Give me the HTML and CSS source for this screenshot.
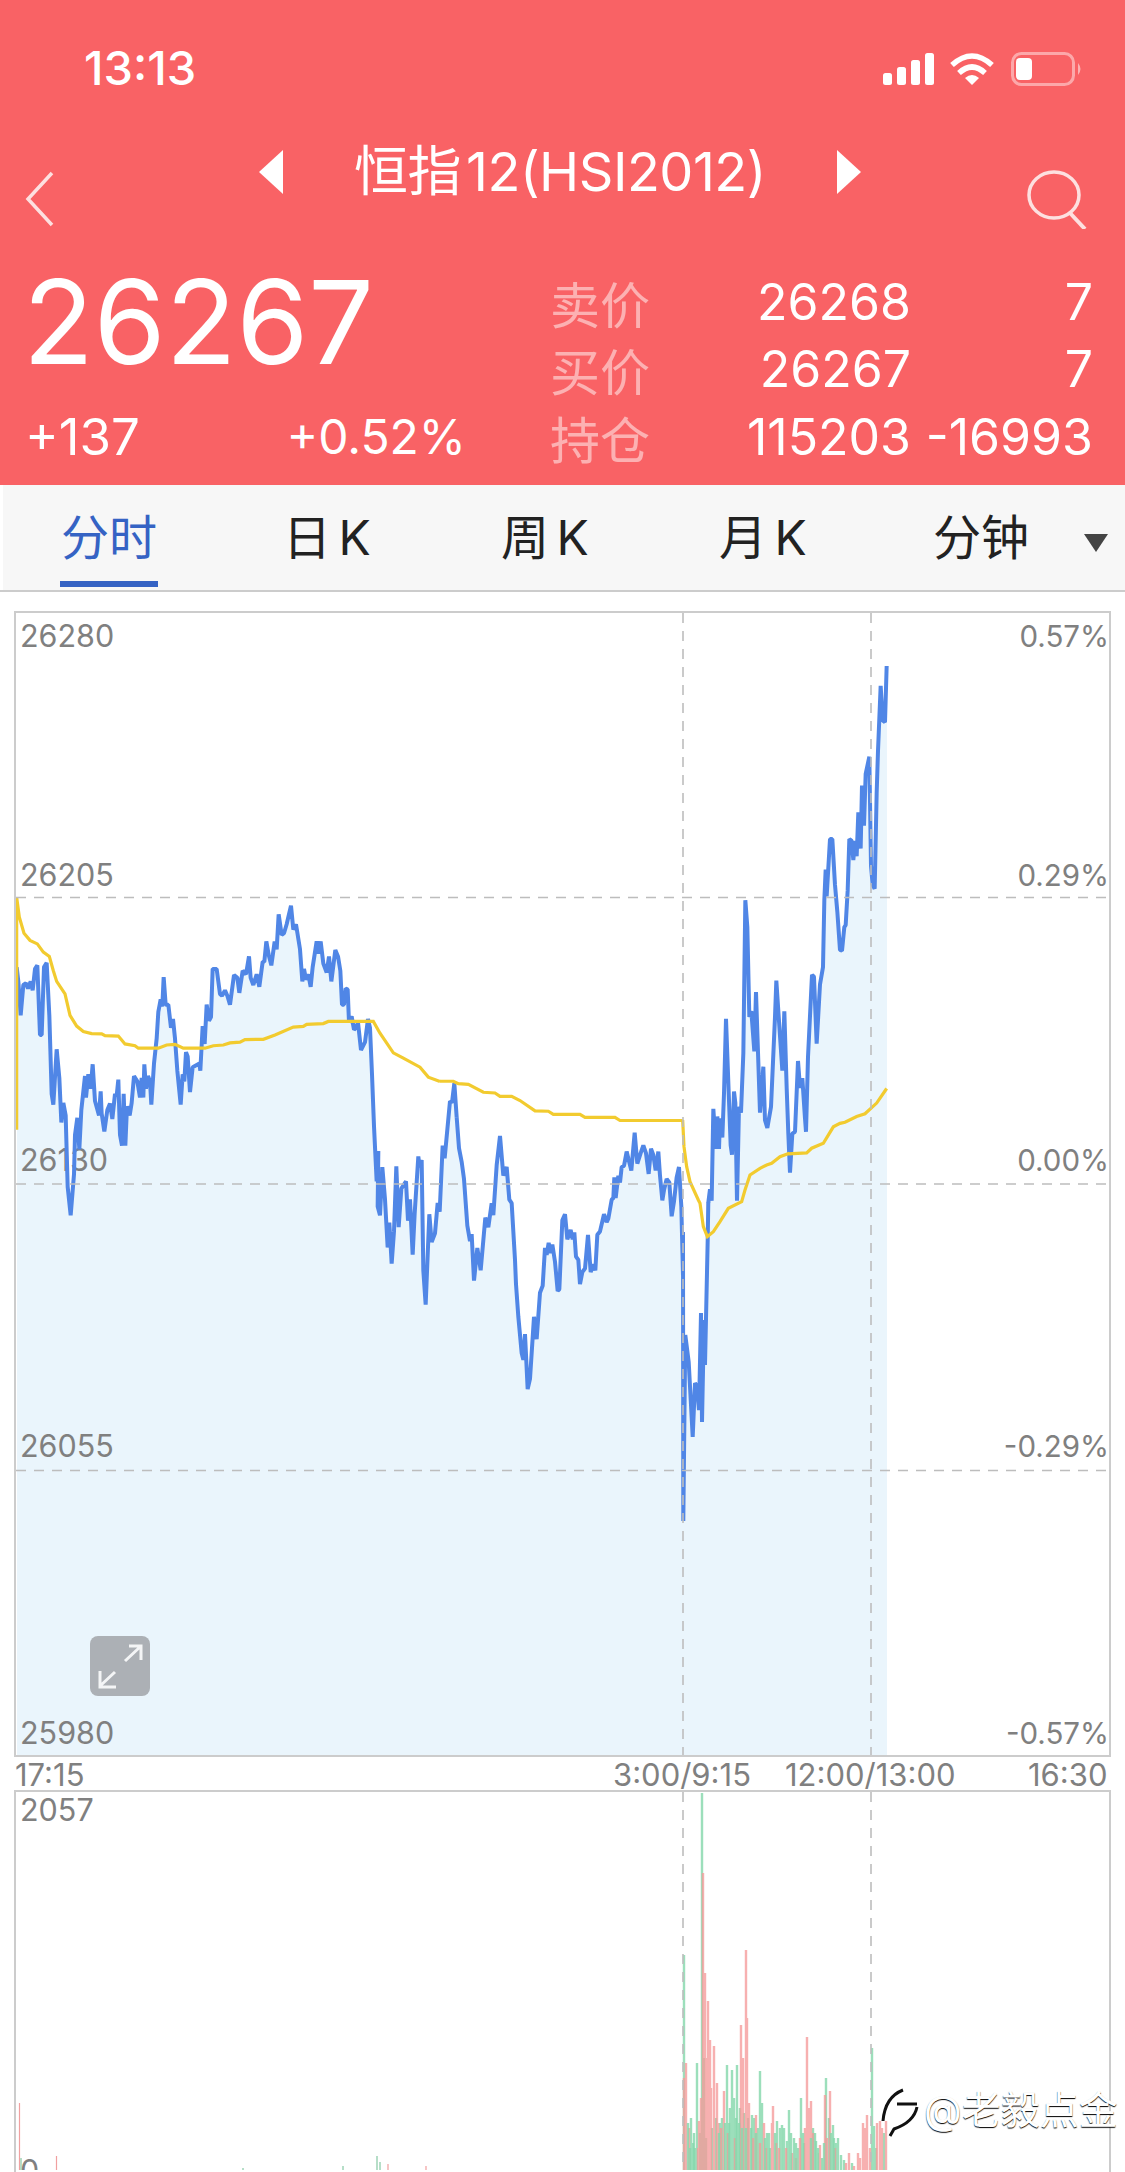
FILE: index.html
```html
<!DOCTYPE html>
<html lang="zh">
<head>
<meta charset="utf-8">
<title>恒指12</title>
<link rel="stylesheet" href="styles.css">
</head>
<body>
<header class="header">
  <div class="status">
    <span class="clock">13:13</span>
    <svg class="status-icons" width="202" height="34" viewBox="0 0 202 34">
      <rect x="0" y="21" width="9" height="12" rx="2.5" fill="#fff"/>
      <rect x="14" y="15" width="9" height="18" rx="2.5" fill="#fff"/>
      <rect x="28" y="8" width="9" height="25" rx="2.5" fill="#fff"/>
      <rect x="42" y="1" width="9" height="32" rx="2.5" fill="#fff"/>
      <path d="M69 13 Q89 -5 109 13" fill="none" stroke="#fff" stroke-width="5.5"/>
      <path d="M76 21 Q89 9 102 21" fill="none" stroke="#fff" stroke-width="5.5"/>
      <path d="M82 26 Q89 20 96 26 L89 33 Z" fill="#fff"/>
      <rect x="129.500" y="1.500" width="61" height="31" rx="9" fill="none" stroke="#fff" stroke-opacity=".45" stroke-width="3"/>
      <rect x="133" y="6" width="16" height="22" rx="4" fill="#fff"/>
      <path d="M195 11 Q200 17 195 23 Z" fill="#fff" fill-opacity=".5"/>
    </svg>
  </div>
  <div class="nav">
    <svg class="back" width="30" height="56" viewBox="0 0 30 56"><path d="M27 2 L3 28 L27 54" fill="none" stroke="#fde0e0" stroke-width="3.500"/></svg>
    <div class="title-group">
      <svg width="24" height="44" viewBox="0 0 24 44"><path d="M24 0 V44 L0 22 Z" fill="#fff"/></svg>
      <h1 class="title">恒指<span class="title-code">12(HSI2012)</span></h1>
      <svg width="24" height="44" viewBox="0 0 24 44"><path d="M0 0 V44 L24 22 Z" fill="#fff"/></svg>
    </div>
    <svg class="search" width="60" height="60" viewBox="0 0 60 60"><ellipse cx="27" cy="26" rx="25" ry="23" fill="none" stroke="#fde0e0" stroke-width="3.500"/><path d="M43 44 L58 60" fill="none" stroke="#fde0e0" stroke-width="4"/></svg>
  </div>
  <div class="quote">
    <div class="main-quote">
      <div class="last">26267</div>
      <div class="changes"><span class="change-abs">+137</span><span>+0.52%</span></div>
    </div>
    <div class="book">
      <span class="book-label">卖价</span><span>26268</span><span>7</span>
      <span class="book-label">买价</span><span>26267</span><span>7</span>
      <span class="book-label">持仓</span><span>115203</span><span>-16993</span>
    </div>
  </div>
</header>

<nav class="tabs">
  <a class="tab active">分时</a>
  <a class="tab">日 K</a>
  <a class="tab">周 K</a>
  <a class="tab">月 K</a>
  <a class="tab">分钟</a>
  <span class="caret"></span>
</nav>

<section class="panel price-panel">
  <svg class="chart" width="1093" height="1142" viewBox="16 613 1093 1142">
    <g class="area">
      <path transform="translate(0 860) scale(.33333 .35714)" d="M50 300 55 340 62 435 70 350 78 345 84 360 92 340 98 365 105 305 112 295 120 490 125 490 132 300 140 288 148 435 155 655 160 685 170 530 178 610 184 735 190 680 197 715 203 915 212 995 222 880 225 770 232 722 238 810 244 700 255 605 258 665 265 600 272 640 278 572 285 675 297 715 302 648 305 710 313 760 322 700 330 682 337 725 345 655 350 660 355 615 360 770 366 800 371 655 376 800 381 690 389 715 395 680 402 605 412 620 420 665 425 610 430 665 433 572 438 640 444 605 450 620 454 685 462 570 470 500 475 425 482 390 487 410 491 328 497 405 505 405 513 470 519 445 525 500 532 590 542 685 548 600 553 620 558 538 563 550 570 650 578 580 598 570 601 590 608 465 614 515 620 405 627 450 633 440 638 305 650 305 660 375 666 380 675 365 682 380 690 405 702 322 712 330 718 372 728 310 738 320 747 270 752 330 760 350 770 320 778 355 788 285 793 285 799 228 806 265 814 295 824 228 830 250 836 152 845 210 852 205 860 180 873 128 880 195 888 180 900 250 907 340 912 305 918 335 925 320 932 355 938 300 950 228 956 262 962 228 970 290 980 315 987 270 994 340 1006 252 1014 270 1021 310 1026 405 1032 405 1037 360 1043 362 1047 455 1055 438 1062 475 1068 470 1074 455 1083 532 1095 510 1104 445 1110 470 1116 600 1122 745 1130 900 1135 815 1133 970 1140 995 1147 860 1155 950 1163 1085 1168 1015 1175 1130 1182 1040 1189 858 1196 1028 1204 920 1218 900 1224 1010 1230 950 1238 1105 1244 990 1255 830 1259 860 1265 840 1270 1150 1277 1245 1288 992 1295 1070 1305 1045 1313 960 1319 985 1328 800 1334 835 1350 675 1356 680 1363 625 1370 720 V2512 H50 Z"/>
      <path transform="translate(440 1000) scale(.33333 .34435)" d="M50 340 57 430 65 470 72 520 82 655 90 700 95 680 102 815 112 720 122 785 136 632 145 660 155 590 160 625 170 480 180 395 190 510 200 485 208 580 215 590 225 755 228 825 235 920 245 1025 250 1045 255 970 263 1130 270 1100 282 920 290 985 300 850 308 830 315 720 320 740 326 705 332 735 337 710 345 760 353 845 358 840 367 640 375 622 382 695 392 668 398 695 403 675 408 745 415 755 420 825 427 790 435 780 444 682 452 790 460 768 466 785 472 682 480 672 492 622 500 645 505 635 515 580 520 575 523 515 527 575 535 510 540 530 545 485 552 482 560 440 565 460 574 495 584 385 592 475 602 445 610 422 618 445 626 505 633 432 640 450 647 495 655 440 660 510 667 582 672 552 680 520 688 530 695 628 702 585 710 515 717 485 724 600 729 800 V2198 H50 Z"/>
      <path d="M683 1232 683.300 1521 685.300 1335 688.700 1362 692.700 1437 695 1383 697 1386 699 1410 701 1313 702 1422 704 1320 705 1365 707.700 1240 708.300 1202 V1757 H683 Z"/>
      <path transform="translate(660 640) scale(.33333 .38270)" d="M145 1470 150 1435 155 1465 160 1225 168 1330 172 1245 177 1330 180 1250 187 1300 192 1185 198 990 206 1180 212 1320 216 1345 222 1180 226 1210 231 1465 237 1220 243 1235 250 1080 256 680 262 750 268 985 274 970 283 1075 288 920 300 1235 310 1115 315 1255 322 1275 333 1220 345 985 349 890 355 970 367 1125 373 970 380 1170 385 1290 390 1392 397 1290 405 1285 414 1100 420 1170 427 1145 435 1250 438 1285 444 1090 456 875 462 880 470 1055 480 900 489 855 493 680 497 600 500 670 510 520 517 520 525 640 532 710 540 810 546 812 553 750 557 745 563 655 568 520 575 525 580 575 585 525 590 565 595 450 602 545 606 380 612 485 617 350 628 305 633 590 638 640 644 650 650 400 654 290 662 120 668 210 675 215 680 68 V2919 H145 Z"/>
    </g>
    <g class="axis-text">
      <text x="20" y="647">26280</text>
      <text x="20" y="886">26205</text>
      <text x="20" y="1171">26130</text>
      <text x="20" y="1457">26055</text>
      <text x="20" y="1744">25980</text>
      <text class="end" x="1109" y="647">0.57%</text>
      <text class="end" x="1109" y="886">0.29%</text>
      <text class="end" x="1109" y="1171">0.00%</text>
      <text class="end" x="1109" y="1457">-0.29%</text>
      <text class="end" x="1109" y="1744">-0.57%</text>
    </g>
    <g class="price-line">
      <path transform="translate(0 860) scale(.33333 .35714)" d="M50 300 55 340 62 435 70 350 78 345 84 360 92 340 98 365 105 305 112 295 120 490 125 490 132 300 140 288 148 435 155 655 160 685 170 530 178 610 184 735 190 680 197 715 203 915 212 995 222 880 225 770 232 722 238 810 244 700 255 605 258 665 265 600 272 640 278 572 285 675 297 715 302 648 305 710 313 760 322 700 330 682 337 725 345 655 350 660 355 615 360 770 366 800 371 655 376 800 381 690 389 715 395 680 402 605 412 620 420 665 425 610 430 665 433 572 438 640 444 605 450 620 454 685 462 570 470 500 475 425 482 390 487 410 491 328 497 405 505 405 513 470 519 445 525 500 532 590 542 685 548 600 553 620 558 538 563 550 570 650 578 580 598 570 601 590 608 465 614 515 620 405 627 450 633 440 638 305 650 305 660 375 666 380 675 365 682 380 690 405 702 322 712 330 718 372 728 310 738 320 747 270 752 330 760 350 770 320 778 355 788 285 793 285 799 228 806 265 814 295 824 228 830 250 836 152 845 210 852 205 860 180 873 128 880 195 888 180 900 250 907 340 912 305 918 335 925 320 932 355 938 300 950 228 956 262 962 228 970 290 980 315 987 270 994 340 1006 252 1014 270 1021 310 1026 405 1032 405 1037 360 1043 362 1047 455 1055 438 1062 475 1068 470 1074 455 1083 532 1095 510 1104 445 1110 470 1116 600 1122 745 1130 900 1135 815 1133 970 1140 995 1147 860 1155 950 1163 1085 1168 1015 1175 1130 1182 1040 1189 858 1196 1028 1204 920 1218 900 1224 1010 1230 950 1238 1105 1244 990 1255 830 1259 860 1265 840 1270 1150 1277 1245 1288 992 1295 1070 1305 1045 1313 960 1319 985 1328 800 1334 835 1350 675 1356 680 1363 625 1370 720"/>
      <path transform="translate(440 1000) scale(.33333 .34435)" d="M50 340 57 430 65 470 72 520 82 655 90 700 95 680 102 815 112 720 122 785 136 632 145 660 155 590 160 625 170 480 180 395 190 510 200 485 208 580 215 590 225 755 228 825 235 920 245 1025 250 1045 255 970 263 1130 270 1100 282 920 290 985 300 850 308 830 315 720 320 740 326 705 332 735 337 710 345 760 353 845 358 840 367 640 375 622 382 695 392 668 398 695 403 675 408 745 415 755 420 825 427 790 435 780 444 682 452 790 460 768 466 785 472 682 480 672 492 622 500 645 505 635 515 580 520 575 523 515 527 575 535 510 540 530 545 485 552 482 560 440 565 460 574 495 584 385 592 475 602 445 610 422 618 445 626 505 633 432 640 450 647 495 655 440 660 510 667 582 672 552 680 520 688 530 695 628 702 585 710 515 717 485 724 600 729 800"/>
      <path d="M683 1232 683.300 1521 685.300 1335 688.700 1362 692.700 1437 695 1383 697 1386 699 1410 701 1313 702 1422 704 1320 705 1365 707.700 1240 708.300 1202"/>
      <path transform="translate(660 640) scale(.33333 .38270)" d="M145 1470 150 1435 155 1465 160 1225 168 1330 172 1245 177 1330 180 1250 187 1300 192 1185 198 990 206 1180 212 1320 216 1345 222 1180 226 1210 231 1465 237 1220 243 1235 250 1080 256 680 262 750 268 985 274 970 283 1075 288 920 300 1235 310 1115 315 1255 322 1275 333 1220 345 985 349 890 355 970 367 1125 373 970 380 1170 385 1290 390 1392 397 1290 405 1285 414 1100 420 1170 427 1145 435 1250 438 1285 444 1090 456 875 462 880 470 1055 480 900 489 855 493 680 497 600 500 670 510 520 517 520 525 640 532 710 540 810 546 812 553 750 557 745 563 655 568 520 575 525 580 575 585 525 590 565 595 450 602 545 606 380 612 485 617 350 628 305 633 590 638 640 644 650 650 400 654 290 662 120 668 210 675 215 680 68"/>
    </g>
    <g class="avg-line">
      <path transform="translate(0 860) scale(.33333 .35714)" d="M50 755 V105 L58 160 72 205 90 225 112 235 130 258 148 270 160 310 170 340 195 375 210 435 230 465 250 480 275 486 305 487 315 492 355 493 375 515 405 520 415 527 475 527 500 518 525 516 550 527 615 527 640 520 670 518 690 512 720 510 735 503 790 502 825 490 880 468 910 466 920 460 970 458 985 452 1120 452 1140 485 1180 540 1210 555 1260 580 1285 608 1320 620"/>
      <path transform="translate(440 1000) scale(.33333 .34435)" d="M0 236 40 236 55 243 85 245 130 268 165 270 180 280 215 280 240 292 285 322 325 323 340 332 420 332 435 341 525 341 540 350 728 350"/>
      <path transform="translate(670 1000) scale(.33333 .33333)" d="M38 360 42 440 50 500 60 545 85 600 90 610 100 680 112 710 130 695 150 665 175 625 215 605 225 570 240 525 270 505 290 495 305 490 330 470 358 460"/>
      <path transform="translate(660 640) scale(.33333 .38270)" d="M385 1343 440 1340 455 1328 490 1315 520 1272 540 1263 555 1260 590 1245 615 1238 650 1210 680 1172"/>
    </g>
    <g class="grid">
      <path d="M16 897.500 H1109 M16 1184 H1109 M16 1470.500 H1109"/>
      <path d="M683 613 V1755 M871 613 V1755"/>
    </g>
    <g class="expand">
      <rect x="90" y="1636" width="60" height="60" rx="8"/>
      <path d="M125 1661 L140 1647 M129 1646 H141 V1660 M100 1686 L115 1672 M100 1671 V1687 H116"/>
    </g>
  </svg>
</section>

<div class="times">
  <span>17:15</span><span>3:00/9:15</span><span>12:00/13:00</span><span>16:30</span>
</div>

<section class="panel volume-panel">
  <svg class="chart" width="1093" height="378" viewBox="16 1794 1093 378">
    <g class="axis-text">
      <text x="20" y="1823">2057</text>
      <text x="20" y="2184">0</text>
    </g>
    <path class="bars green" d="M684 2172V1957M691 2172V2120M693 2172V2145M695 2172V2150M697 2172V2065M700 2172V2135M702 2172V1795M704 2172V2060M706 2172V2140M712 2172V2130M716 2172V2120M720 2172V2125M722 2172V2120M727 2172V2067M730 2172V2110M732 2172V2072M734 2172V2100M737 2172V2067M740 2172V2110M744 2172V2115M748 2172V2120M752 2172V2117M754 2172V2120M758 2172V2130M760 2172V2073M762 2172V2105M767 2172V2135M770 2172V2150M777 2172V2123M780 2172V2130M782 2172V2127M787 2172V2143M789 2172V2112M794 2172V2140M798 2172V2150M801 2172V2100M804 2172V2145M813 2172V2130M816 2172V2143M822 2172V2160M826 2172V2080M829 2172V2120M833 2172V2127M836 2172V2145M838 2172V2140M841 2172V2157M844 2172V2162M852 2172V2165M872 2172V2050M874 2172V2128M876 2172V2150M884 2172V2135"/>
    <path class="bars pink" d="M684 2172V2080M686 2172V2065M689 2172V2130M698 2172V2150M699 2172V2123M701 2172V2100M703 2172V1875M705 2172V1975M707 2172V2060M708 2172V2003M710 2172V2042M711 2172V2090M714 2172V2048M717 2172V2085M718 2172V2125M721 2172V2130M724 2172V2093M728 2172V2135M735 2172V2140M741 2172V2027M743 2172V2060M746 2172V1952M747 2172V2020M749 2172V2105M753 2172V2140M756 2172V2117M760 2172V2145M764 2172V2125M766 2172V2150M772 2172V2125M773 2172V2108M776 2172V2145M779 2172V2150M786 2172V2150M792 2172V2155M796 2172V2160M800 2172V2140M805 2172V2130M807 2172V2039M809 2172V2110M811 2172V2103M813 2172V2135M819 2172V2155M820 2172V2147M825 2172V2097M827 2172V2140M830 2172V2093M835 2172V2150M846 2172V2165M849 2172V2155M854 2172V2168M858 2172V2155M860 2172V2160M863 2172V2125M865 2172V2130M867 2172V2117M870 2172V2150M877 2172V2125M880 2172V2123M882 2172V2130M886 2172V2123"/>
    <path class="bars green" d="M688 2172V2125M690 2172V2150M694 2172V2135M719 2172V2135M725 2172V2125M729 2172V2125M736 2172V2120M739 2172V2125M742 2172V2130M746 2172V2130M751 2172V2130M756 2172V2135M765 2172V2140M769 2172V2135M775 2172V2135M784 2172V2130M791 2172V2135M796 2172V2145M803 2172V2135M811 2172V2140M815 2172V2135M818 2172V2150M824 2172V2145M831 2172V2135M834 2172V2140"/>
    <path class="bars thin-pink" d="M19.500 2172V2105M56.500 2172V2158M388 2172V2166M426 2172V2168"/>
    <path class="bars thin-green" d="M21 2172V2160M377 2172V2158M380 2172V2164M243 2172V2170M343 2172V2168"/>
    <g class="grid"><path d="M683 1794 V2172 M871 1794 V2172"/></g>
  </svg>
  <div class="watermark">
    <svg width="40" height="50" viewBox="0 0 40 50"><path d="M3 34 Q5 10 23 3 M17 17 H37 M37 20 Q34 35 14 42 L10 49" fill="none" stroke="#111" stroke-width="3"/></svg>
    <span class="watermark-text">@老毅点金</span>
  </div>
</section>
</body>
</html>
```
FILE: styles.css
```css
* { box-sizing: border-box; }
html, body { margin: 0; padding: 0; }
body {
  width: 1125px;
  height: 2172px;
  overflow: hidden;
  background: #fff;
  font-family: Inter, "Noto Sans CJK SC", sans-serif;
}

.header { height: 485px; background: #f96265; color: #fff; }

.status {
  height: 100px;
  padding: 35px 40px 0 84px;
  display: flex;
  justify-content: space-between;
  align-items: center;
}
.clock { font-size: 47px; font-weight: 500; line-height: 50px; }
.status-icons { display: block; margin-top: 3px; }

.nav {
  height: 140px;
  padding: 44px 38px 0 25px;
  display: grid;
  grid-template-columns: 1fr auto 1fr;
  align-items: start;
}
.back { display: block; margin-top: 27px; }
.search { display: block; margin-top: 25px; justify-self: end; }
.title-group { display: flex; align-items: center; gap: 71px; height: 56px; margin-left: 8px; }
.title { margin: 0; font-size: 54px; font-weight: 400; line-height: 56px; white-space: nowrap; letter-spacing: -.5px; }
.title-code { margin-left: 5px; }

.quote {
  height: 245px;
  padding: 28px 32px 0 25px;
  display: grid;
  grid-template-columns: 525px 543px;
}
.main-quote { display: flex; flex-direction: column; justify-content: space-between; height: 203px; }
.last { font-size: 116px; line-height: 110px; margin-top: -1px; margin-left: -2px; }
.changes {
  width: 441px;
  display: flex;
  justify-content: space-between;
  font-size: 48px;
  line-height: 68px;
}
.change-abs { font-size: 51px; }
.book {
  display: grid;
  grid-template-columns: 100px 261px 182px;
  grid-auto-rows: 67.5px;
  align-items: center;
  text-align: right;
  font-size: 50px;
}
.book-label { text-align: left; font-size: 50px; color: rgba(255, 255, 255, .5); }

.tabs {
  position: relative;
  height: 107px;
  background: linear-gradient(#fff, #fff) 0 0 / 3px 100% no-repeat, #f7f7f7;
  border-bottom: 2px solid #ccc;
  display: grid;
  grid-template-columns: repeat(5, 218px);
}
.tab {
  display: flex;
  align-items: center;
  justify-content: center;
  padding-bottom: 8px;
  font-size: 48px;
  word-spacing: -6px;
  color: #222;
}
.tab.active { color: #3563c4; position: relative; }
.tab.active::after {
  content: "";
  position: absolute;
  left: 60px;
  width: 98px;
  bottom: 3px;
  height: 6px;
  background: #3563c4;
}
.caret {
  position: absolute;
  right: 17px;
  top: 49px;
  border-left: 12px solid transparent;
  border-right: 12px solid transparent;
  border-top: 18px solid #444;
}

.panel {
  position: relative;
  margin: 0 14px;
  border: 2px solid #ccc;
}
.price-panel { margin-top: 19px; height: 1146px; }
.volume-panel { height: 384px; border-bottom: 0; }
.chart { display: block; }

.area path { fill: #eaf5fc; shape-rendering: crispEdges; }
.price-line path {
  fill: none;
  stroke: #5086e6;
  stroke-width: 4px;
  stroke-linejoin: bevel;
  vector-effect: non-scaling-stroke;
}
.avg-line path {
  fill: none;
  stroke: #f2cb2f;
  stroke-width: 3.2px;
  vector-effect: non-scaling-stroke;
}
.grid path { fill: none; stroke: #bdbdbd; stroke-width: 1.6px; stroke-dasharray: 10 8; }
.axis-text text { font-size: 30.5px; fill: #808080; font-family: Inter, sans-serif; }
.axis-text text.end { font-size: 29.5px; text-anchor: end; }
.expand rect { fill: #acb0b5; }
.expand path { fill: none; stroke: #f4f5f6; stroke-width: 3px; }

.bars { fill: none; }
.bars.green { stroke: #86d8ac; stroke-width: 2.4px; stroke-opacity: .82; }
.bars.pink { stroke: #f59a9a; stroke-width: 2.4px; stroke-opacity: .78; }
.bars.thin-pink { stroke: #f0a0a0; stroke-width: 1.2px; }
.bars.thin-green { stroke: #86c8a4; stroke-width: 1.2px; }

.times {
  height: 33px;
  padding-left: 15px;
  display: grid;
  grid-template-columns: 598px 172px 243px auto;
  font-size: 31px;
  line-height: 35px;
  color: #808080;
}

.watermark {
  position: absolute;
  left: 864px;
  top: 295px;
  display: flex;
  align-items: center;
  gap: 4px;
  font-size: 39px;
  line-height: 50px;
  white-space: nowrap;
  color: #fff;
  text-shadow: 0 1px 1px #000;
}
.watermark-text { margin-top: -5px; }
```
